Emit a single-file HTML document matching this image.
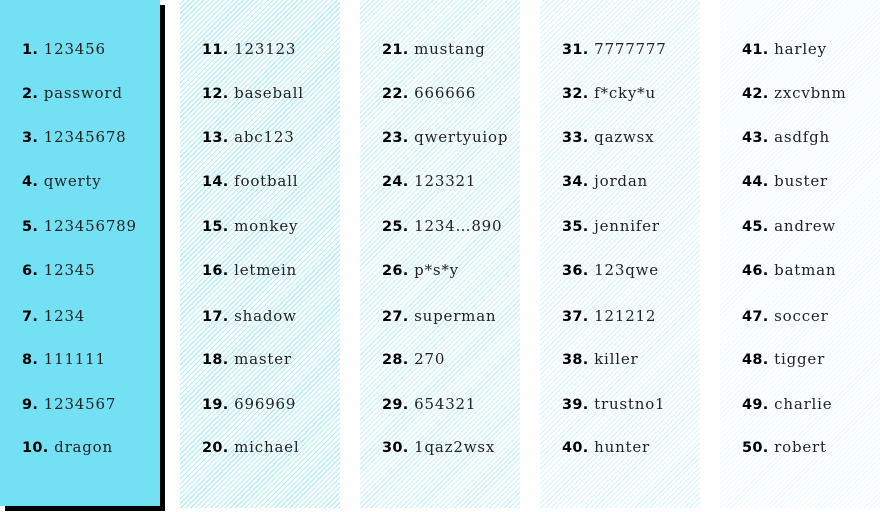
<!DOCTYPE html><html><head><style>
body{margin:0;width:880px;height:512px;background:#fff;position:relative;overflow:hidden;font-family:"DejaVu Serif",serif;}
.col{position:absolute;top:0;width:160px;height:508px;}
.c1{left:0;height:506px;background:#74e0f4;box-shadow:5px 5px 0 #000;}
.s{background:repeating-linear-gradient(-45deg,var(--c) 0 1.2px,transparent 1.2px 3.5px);}
.row{position:absolute;left:22px;font-size:15px;color:#222;letter-spacing:0.8px;white-space:nowrap;line-height:20px}
.row b{font-family:"DejaVu Sans",sans-serif;font-weight:bold;font-size:14.5px;color:#000;letter-spacing:0.3px}
</style></head><body>
<div class="col c1"></div>
<div class="col s" style="left:180px;--c:rgba(116,224,244,.55)"></div>
<div class="col s" style="left:360px;--c:rgba(116,224,244,.38)"></div>
<div class="col s" style="left:540px;--c:rgba(116,224,244,.25)"></div>
<div class="col s" style="left:720px;--c:rgba(116,224,244,.15)"></div>
<div id="r"></div>
<script>
var w=["123456","password","12345678","qwerty","123456789","12345","1234","111111","1234567","dragon","123123","baseball","abc123","football","monkey","letmein","shadow","master","696969","michael","mustang","666666","qwertyuiop","123321","1234…890","p*s*y","superman","270","654321","1qaz2wsx","7777777","f*cky*u","qazwsx","jordan","jennifer","123qwe","121212","killer","trustno1","hunter","harley","zxcvbnm","asdfgh","buster","andrew","batman","soccer","tigger","charlie","robert"];
var ys=[49,93,137,181,226,270,316,359,404,447],h="";
for(var i=0;i<50;i++){var c=Math.floor(i/10),r=i%10;h+='<div class="row" style="left:'+(22+c*180)+'px;top:'+(ys[r]-10)+'px"><b>'+(i+1)+'.</b> '+w[i]+'</div>';}
document.getElementById('r').innerHTML=h;
</script>
</body></html>
